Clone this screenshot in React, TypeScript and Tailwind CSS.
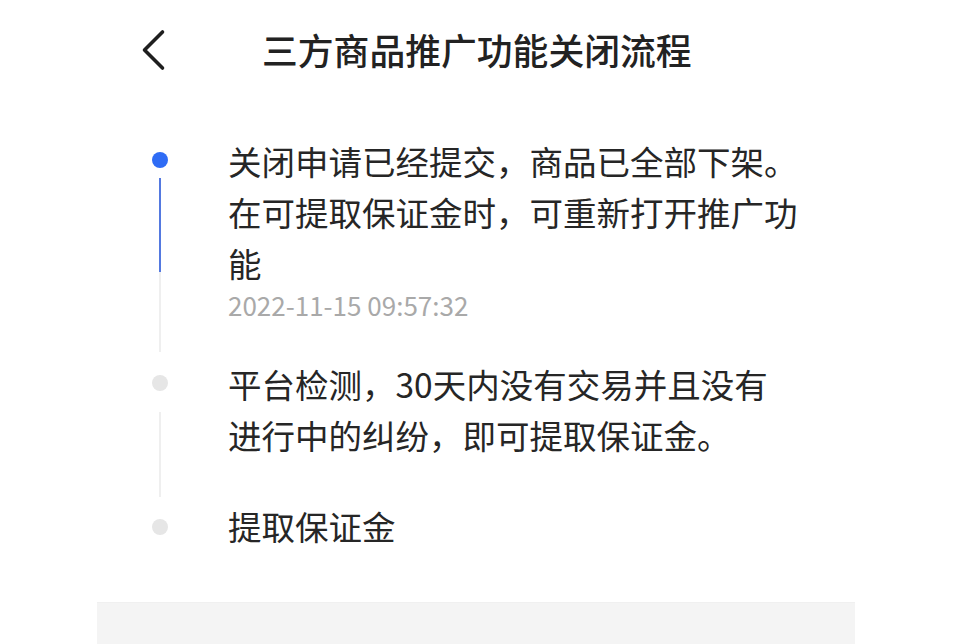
const font = { fontFamily: '"Noto Sans CJK SC", "Noto Sans", sans-serif' };

type Step = {
  text: string;
  time?: string;
  active: boolean;
};

const steps: Step[] = [
  {
    text: '关闭申请已经提交，商品已全部下架。在可提取保证金时，可重新打开推广功能',
    time: '2022-11-15 09:57:32',
    active: true,
  },
  { text: '平台检测，30天内没有交易并且没有进行中的纠纷，即可提取保证金。', active: false },
  { text: '提取保证金', active: false },
];

export default function App() {
  return (
    <div className="w-[967px] h-[644px] bg-white overflow-hidden flex flex-col" style={font}>
      {/* header */}
      <div className="h-[100px] shrink-0 flex items-center">
        <div className="ml-[140px] w-[26px] h-[44px] flex items-center justify-center">
          <svg width="26" height="44" viewBox="0 0 26 44" fill="none">
            <path d="M22.5 4 L4.5 22 L22.5 40" stroke="#1f1f1f" strokeWidth="3.6" strokeLinecap="round" strokeLinejoin="round" />
          </svg>
        </div>
        <h1 className="ml-[96px] text-[35.8px] leading-none font-medium text-[#222]">
          三方商品推广功能关闭流程
        </h1>
      </div>

      {/* timeline */}
      <div className="mt-[34.5px] ml-[152px] flex flex-col shrink-0">
        {/* step 1 */}
        <div className="flex h-[223px]">
          <div className="w-[16px] shrink-0 flex flex-col items-center">
            <div className="mt-[17.5px] w-[16px] h-[16px] rounded-full bg-[#2f6cf5]" />
            <div className="mt-[10px] w-[2px] h-[94px] bg-[#5479e0]" />
            <div className="w-[2px] h-[80px] bg-[#efefef]" />
          </div>
          <div className="ml-[60px] w-[572px]">
            <p className="text-[33.5px] leading-[51px] text-[#262626]">{steps[0].text}</p>
            <p className="text-[26px] leading-[34px] text-[#a9a9a9]">{steps[0].time}</p>
          </div>
        </div>

        {/* step 2 */}
        <div className="flex h-[142px]">
          <div className="w-[16px] shrink-0 flex flex-col items-center">
            <div className="mt-[17.5px] w-[16px] h-[16px] rounded-full bg-[#e6e6e6]" />
            <div className="mt-[21px] w-[2px] h-[85px] bg-[#efefef]" />
          </div>
          <div className="ml-[60px] w-[572px]">
            <p className="text-[33.5px] leading-[51px] text-[#262626]">{steps[1].text}</p>
          </div>
        </div>

        {/* step 3 */}
        <div className="flex">
          <div className="w-[16px] shrink-0 flex flex-col items-center">
            <div className="mt-[19.5px] w-[16px] h-[16px] rounded-full bg-[#e6e6e6]" />
          </div>
          <div className="ml-[60px] w-[572px]">
            <p className="text-[33.5px] leading-[51px] text-[#262626]">{steps[2].text}</p>
          </div>
        </div>
      </div>

      {/* bottom panel */}
      <div className="mt-auto shrink-0 ml-[97px] w-[758px] h-[42px] bg-[#f4f4f4] border-t border-[#f0f0f0]" />
    </div>
  );
}
